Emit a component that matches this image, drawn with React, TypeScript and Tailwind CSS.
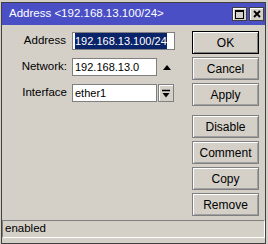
import React from "react";

const font = { fontFamily: '"Liberation Sans", Arial, sans-serif' };

function WinButton({ label, isDefault }: { label: string; isDefault?: boolean }) {
    return (
        <div
            className={`flex h-[23px] w-[67px] items-center justify-center border text-[12px] text-black ${
                isDefault
                    ? "border-black shadow-[inset_1px_1px_0_#ffffff,inset_-1px_-1px_0_#808080]"
                    : "border-[#808080] shadow-[inset_1px_1px_0_#ffffff,inset_-1px_-1px_0_#a0a0a0]"
            }`}
        >
            {label}
        </div>
    );
}

function Field({ children, width }: { children: React.ReactNode; width: string }) {
    return (
        <div className={`flex h-[18px] items-center border border-[#7f7f7f] bg-white pl-[2px] text-[11px] text-black ${width}`}>
            {children}
        </div>
    );
}

export default function App() {
    return (
        <div className="h-[244px] w-[268px] overflow-hidden bg-[#d4d0c8] pl-[1px] pt-[2px]" style={font}>
            <div className="flex h-[242px] w-[265px] flex-col border border-[#404040] bg-[#d4d0c8]">
                {/* Title bar */}
                <div className="flex h-[22px] shrink-0 items-center bg-[#4a4fc6] pl-[7px] pr-[1px]">
                    <span className="flex-1 text-[11.5px] text-white">Address &lt;192.168.13.100/24&gt;</span>
                    <div className="flex gap-[2px]">
                        <div className="flex h-[14px] w-[15px] items-center justify-center border border-[#404040] bg-[#d4d0c8] shadow-[inset_1px_1px_0_#ffffff]">
                            <div className="h-[9px] w-[9px] border border-black border-t-2" />
                        </div>
                        <div className="flex h-[14px] w-[15px] items-center justify-center border border-[#404040] bg-[#d4d0c8] shadow-[inset_1px_1px_0_#ffffff]">
                            <svg width="8" height="8" viewBox="0 0 8 8">
                                <path d="M1 1 L7 7 M7 1 L1 7" stroke="black" strokeWidth="1.8" />
                            </svg>
                        </div>
                    </div>
                </div>

                {/* Body */}
                <div className="flex flex-1">
                    <div className="flex w-[190px] flex-col gap-[8px] pt-[7px]">
                        <div className="flex items-center">
                            <span className="w-[65px] pr-px text-right text-[11.5px] text-black">Address</span>
                            <div className="w-[5px]" />
                            <Field width="w-[103px]">
                                <span className="bg-[#0a246a] text-white">192.168.13.100/24</span>
                            </Field>
                        </div>
                        <div className="flex items-center">
                            <span className="w-[65px] text-right text-[11.5px] text-black">Network:</span>
                            <div className="w-[5px]" />
                            <Field width="w-[85px]">192.168.13.0</Field>
                            <svg className="ml-[6px]" width="8" height="6" viewBox="0 0 8 6">
                                <path d="M0 6 L4 1 L8 6 Z" fill="black" />
                            </svg>
                        </div>
                        <div className="flex items-center">
                            <span className="w-[65px] text-right text-[11.5px] text-black">Interface</span>
                            <div className="w-[5px]" />
                            <Field width="w-[85px]">ether1</Field>
                            <div className="ml-px flex h-[18px] w-[16px] items-center justify-center border border-[#808080] shadow-[inset_1px_1px_0_#ffffff]">
                                <svg width="8" height="9" viewBox="0 0 8 9">
                                    <path d="M0 1.5 H8" stroke="black" strokeWidth="1.5" />
                                    <path d="M0.5 4 H7.5 L4 8.5 Z" fill="black" />
                                </svg>
                            </div>
                        </div>
                    </div>

                    <div className="flex flex-col pt-[6px]">
                        <div className="flex flex-col gap-[3px]">
                            <WinButton label="OK" isDefault />
                            <WinButton label="Cancel" />
                            <WinButton label="Apply" />
                        </div>
                        <div className="mt-[9px] flex flex-col gap-[3px]">
                            <WinButton label="Disable" />
                            <WinButton label="Comment" />
                            <WinButton label="Copy" />
                            <WinButton label="Remove" />
                        </div>
                    </div>
                </div>

                {/* Status bar */}
                <div className="mb-[5px] flex h-[18px] shrink-0 items-center border border-t-[#808080] border-l-[#808080] border-b-white border-r-white pl-[2px] text-[11.5px] text-black">
                    enabled
                </div>
            </div>
        </div>
    );
}
